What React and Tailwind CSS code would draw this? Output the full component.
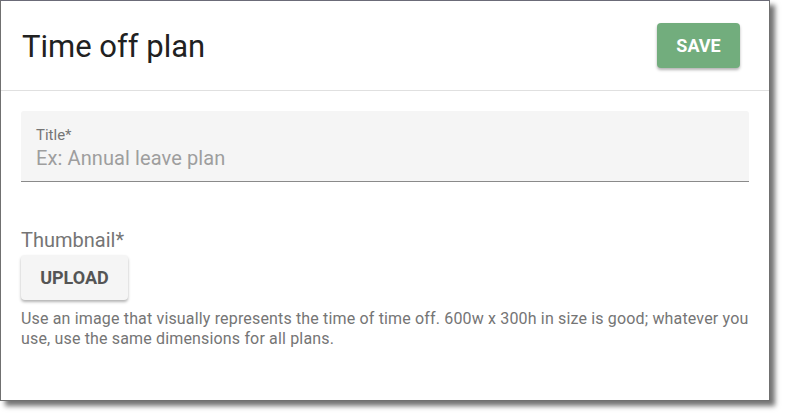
export default function App() {
  return (
    <div className="w-[785px] h-[416px] bg-white" style={{ fontFamily: 'Roboto, "Liberation Sans", sans-serif' }}>
      <div className="w-[770px] h-[401px] bg-white border border-[#707070] border-t-[#6b6b78] shadow-[5px_5px_5px_rgba(0,0,0,0.55)] flex flex-col">
        <div className="h-[90px] flex items-center justify-between pl-[21px] pr-[29px] border-b border-[#e0e0e0]">
          <h1 className="text-[31px] leading-none text-[#212121] font-normal pt-[2px]">Time off plan</h1>
          <button className="w-[83px] h-[45px] rounded-[4px] bg-[#72ad7d] text-white font-bold text-[18px] shadow-[0_2px_3px_rgba(0,0,0,0.3)]">
            SAVE
          </button>
        </div>
        <div className="px-5 pt-5">
          <div className="h-[71px] bg-[#f5f5f5] rounded-t-[3px] border-b border-[#8a8a8a] pl-[15px] pt-[15px]">
            <div className="text-[15px] leading-[18px] text-[#757575]">Title*</div>
            <div className="text-[20px] leading-[24px] text-[#9e9e9e] mt-[2px] tracking-[0.005em]">Ex: Annual leave plan</div>
          </div>
          <div className="mt-[47px] text-[20px] leading-[23px] text-[#757575]">Thumbnail*</div>
          <button className="mt-[3px] w-[107px] h-[45px] rounded-[4px] bg-[#f5f5f5] text-[#555555] font-bold text-[18px] shadow-[0_2px_3px_rgba(0,0,0,0.3)]">
            UPLOAD
          </button>
          <p className="mt-[9px] text-[16px] leading-[20px] text-[#757575] tracking-[0.01em]">
            Use an image that visually represents the time of time off. 600w x 300h in size is good; whatever you use, use the same dimensions for all plans.
          </p>
        </div>
      </div>
    </div>
  );
}
